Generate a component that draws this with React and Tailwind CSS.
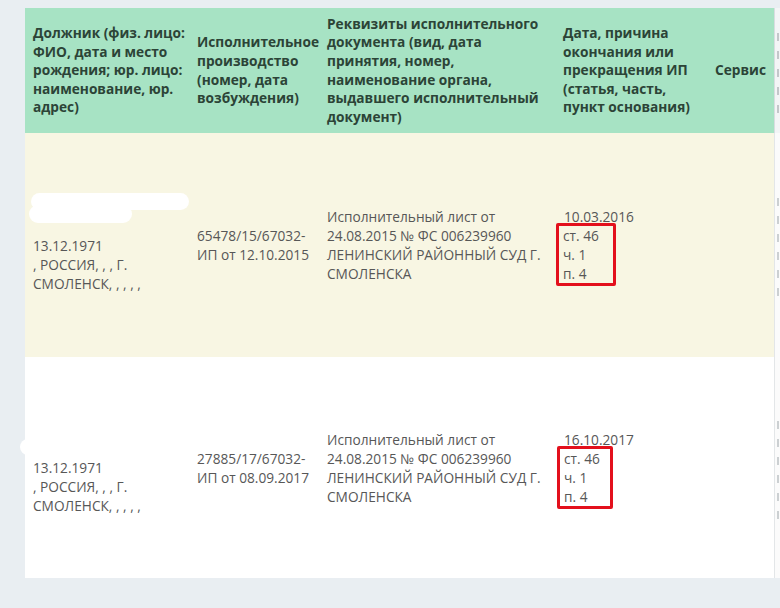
import React from "react";

const rows = [
  {
    bg: "bg-[#f8f6e3]",
    h: "h-[224px]",
    blob: "light",
    ip: ["65478/15/67032-", "ИП от 12.10.2015"],
    end: "10.03.2016",
    box: "-ml-[8px] w-[60px]",
  },
  {
    bg: "bg-white",
    h: "h-[221px]",
    blob: "white",
    ip: ["27885/17/67032-", "ИП от 08.09.2017"],
    end: "16.10.2017",
    box: "-ml-[7px] w-[56px]",
  },
];

const debtorHead = [
  "Должник (физ. лицо:",
  "ФИО, дата и место",
  "рождения; юр. лицо:",
  "наименование, юр.",
  "адрес)",
];

// illegible fragments of the next column, cut off at the window edge
const Marks = ({ n, color }) => (
  <div className="flex flex-col gap-[10px] pt-[4px]">
    {Array.from({ length: n }).map((_, i) => (
      <div key={i} className={`w-[2px] h-[8px] ${color}`} />
    ))}
  </div>
);

export default function App() {
  return (
    <div
      className="w-[780px] h-[608px] overflow-hidden bg-[#e9eef2] pt-[8px] pl-[25px]"
      style={{ fontFamily: '"Open Sans", "Noto Sans", sans-serif' }}
    >
      <table className="table-fixed border-collapse w-[800px]">
        <colgroup>
          <col className="w-[165px]" />
          <col className="w-[130px]" />
          <col className="w-[236px]" />
          <col className="w-[151px]" />
          <col className="w-[67px]" />
          <col className="w-[51px]" />
        </colgroup>
        <thead>
          <tr className="h-[125px] text-[13.7px] leading-[18.6px] font-bold text-[#2c4437] text-left">
            <th className="bg-[#a7e3c4] px-[8px] align-middle font-bold whitespace-nowrap">
              {debtorHead.map((l) => (
                <div key={l}>{l}</div>
              ))}
            </th>
            <th className="bg-[#a7e3c4] px-[7px] align-middle font-bold">
              <span className="whitespace-nowrap">Исполнительное</span> производство (номер, дата возбуждения)
            </th>
            <th className="bg-[#a7e3c4] px-[7px] align-middle font-bold">
              Реквизиты исполнительного документа (вид, дата принятия, номер, наименование органа, выдавшего исполнительный документ)
            </th>
            <th className="bg-[#a7e3c4] px-[7px] align-middle font-bold">
              Дата, причина окончания или прекращения ИП (статья, часть, пункт основания)
            </th>
            <th className="bg-[#a7e3c4] px-[8px] align-middle font-bold">Сервис</th>
            <th className="bg-[#f3f5f6] border-l border-[#d9dde0] px-[2px] align-middle">
              <Marks n={5} color="bg-[#c3c7ca]" />
            </th>
          </tr>
        </thead>
        <tbody>
          {rows.map((r, i) => (
            <tr key={i} className={`${r.h} text-[13.7px] leading-[19px] text-[#575757]`}>
              <td className={`${r.bg} pl-[8px] pr-[4px] align-middle`}>
                <div className="relative h-[38px]">
                  {r.blob === "light" ? (
                    <>
                      <div className="absolute left-[-2px] top-[-5px] w-[158px] h-[17px] rounded-full bg-white" />
                      <div className="absolute left-[-4px] top-[7px] w-[103px] h-[18px] rounded-full bg-white" />
                    </>
                  ) : (
                    <div className="absolute left-[-13px] top-[19px] w-[150px] h-[16px] rounded-full bg-white" />
                  )}
                </div>
                <div>13.12.1971</div>
                <div>, РОССИЯ, , , Г.</div>
                <div>СМОЛЕНСК, , , , ,</div>
              </td>
              <td className={`${r.bg} px-[7px] align-middle whitespace-nowrap`}>
                <div>{r.ip[0]}</div>
                <div>{r.ip[1]}</div>
              </td>
              <td className={`${r.bg} px-[7px] align-middle whitespace-nowrap`}>
                <div>Исполнительный лист от</div>
                <div>24.08.2015 № ФС 006239960</div>
                <div>ЛЕНИНСКИЙ РАЙОННЫЙ СУД Г.</div>
                <div>СМОЛЕНСКА</div>
              </td>
              <td className={`${r.bg} px-[8px] align-middle`}>
                <div>{r.end}</div>
                <div className={`${r.box} -my-[3px] pl-[4px] border-[3px] border-[#e3101c] rounded-[2px]`}>
                  <div>ст. 46</div>
                  <div>ч. 1</div>
                  <div>п. 4</div>
                </div>
              </td>
              <td className={`${r.bg} px-[8px] align-middle`} />
              <td className="bg-[#fbfbfb] border-l border-[#e3e6e8] px-[2px] align-middle">
                <Marks n={6} color="bg-[#ccd0d2]" />
              </td>
            </tr>
          ))}
        </tbody>
      </table>
    </div>
  );
}
